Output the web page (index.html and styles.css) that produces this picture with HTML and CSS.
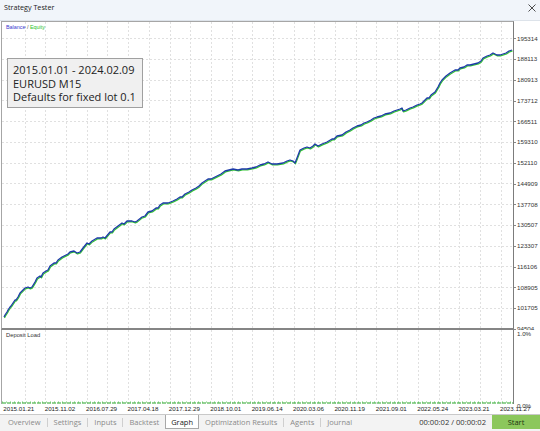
FILE: index.html
```html
<!DOCTYPE html>
<html lang="en">
<head>
<meta charset="utf-8">
<title>Strategy Tester</title>
<link rel="stylesheet" href="styles.css">
</head>
<body>
<div class="window">
  <header class="titlebar">
    <span class="title">Strategy Tester</span>
    <svg class="close" width="8" height="8" viewBox="0 0 8 8"><path d="M0.5 0.5L7.5 7.5M7.5 0.5L0.5 7.5" stroke="#3a3a3a" stroke-width="0.9" fill="none"/></svg>
  </header>
  <div class="chart">
    <div class="plots">
      <div class="panel main-panel">
        <svg class="plot-svg" width="511" height="306" viewBox="2 22 511 306">
          <path class="grid" d="M25.5 22V328M45.5 22V328M66.5 22V328M87.5 22V328M107.5 22V328M128.5 22V328M149.5 22V328M170.5 22V328M190.5 22V328M211.5 22V328M232.5 22V328M252.5 22V328M273.5 22V328M294.5 22V328M314.5 22V328M335.5 22V328M356.5 22V328M376.5 22V328M397.5 22V328M418.5 22V328M439.5 22V328M459.5 22V328M480.5 22V328M501.5 22V328M2 38.5H513M2 59.5H513M2 80.5H513M2 100.5H513M2 121.5H513M2 142.5H513M2 163.5H513M2 183.5H513M2 204.5H513M2 225.5H513M2 246.5H513M2 266.5H513M2 287.5H513M2 308.5H513"/>
          <polyline class="equity" points="4,317 5,315 7,312 8,310 10,307 11,306 13,303 15,300 16,300 18,297 20,293 23,290 25,288 28,287 30,288 32,287 35,282 37,278 40,276 41,277 43,273 46,271 48,270 50,266 54,263 56,263 58,260 62,257 66,255 68,254 70,252 74,251 77,253 80,252 83,248 87,243 89,244 92,241 97,238 101,238 103,237 105,238 110,232 112,232 114,229 118,226 122,223 124,224 127,221 132,221 135,222 137,221 142,217 145,216 148,212 152,211 156,208 158,208 160,205 163,203 168,203 173,201 177,199 180,197 182,197 185,194 189,192 192,190 196,188 199,186 202,183 205,181 208,179 211,179 213,178 217,176 221,174 225,171 229,170 233,169 238,170 242,169 247,169 252,168 256,167 260,165 264,164 268,162 270,163 272,164 277,164 283,163 287,161 290,160 293,161 295,163 297,158 300,150 304,148 307,147 310,148 313,146 315,144 318,146 322,144 327,142 332,139 334,139 337,136 342,135 346,132 350,130 353,128 357,126 361,125 364,123 367,122 371,120 374,118 377,117 381,116 385,114 390,113 394,111 397,110 400,109 402,108 403,111 406,110 410,108 413,107 417,105 420,104 422,103 425,100 427,98 429,98 431,95 435,92 438,87 440,83 442,80 446,76 450,73 455,70 458,70 460,68 464,67 467,65 470,65 474,64 478,63 481,61 483,58 487,56 490,55 493,53 495,54 497,55 500,55 503,54 506,53 509,51 512,50"/>
          <polyline class="balance" points="4,317 5,315 7,312 8,310 10,307 11,306 13,303 15,300 16,300 18,297 20,293 23,290 25,288 28,287 30,288 32,287 35,282 37,278 40,276 41,277 43,273 46,271 48,270 50,266 54,263 56,263 58,260 62,257 66,255 68,254 70,252 74,251 77,253 80,252 83,248 87,243 89,244 92,241 97,238 101,238 103,237 105,238 110,232 112,232 114,229 118,226 122,223 124,224 127,221 132,221 135,222 137,221 142,217 145,216 148,212 152,211 156,208 158,208 160,205 163,203 168,203 173,201 177,199 180,197 182,197 185,194 189,192 192,190 196,188 199,186 202,183 205,181 208,179 211,179 213,178 217,176 221,174 225,171 229,170 233,169 238,170 242,169 247,169 252,168 256,167 260,165 264,164 268,162 270,163 272,164 277,164 283,163 287,161 290,160 293,161 295,163 297,158 300,150 304,148 307,147 310,148 313,146 315,144 318,146 322,144 327,142 332,139 334,139 337,136 342,135 346,132 350,130 353,128 357,126 361,125 364,123 367,122 371,120 374,118 377,117 381,116 385,114 390,113 394,111 397,110 400,109 402,108 403,111 406,110 410,108 413,107 417,105 420,104 422,103 425,100 427,98 429,98 431,95 435,92 438,87 440,83 442,80 446,76 450,73 455,70 458,70 460,68 464,67 467,65 470,65 474,64 478,63 481,61 483,58 487,56 490,55 493,53 495,54 497,55 500,55 503,54 506,53 509,51 512,50"/>
        </svg>
        <div class="legend"><span class="bal">Balance</span> / <span class="eq">Equity</span></div>
        <div class="info">
          <div>2015.01.01 - 2024.02.09</div>
          <div>EURUSD M15</div>
          <div>Defaults for fixed lot 0.1</div>
        </div>
      </div>
      <div class="panel deposit-panel">
        <svg class="plot-svg" width="511" height="74" viewBox="2 330 511 74">
          <path class="grid" d="M25.5 330V404M45.5 330V404M66.5 330V404M87.5 330V404M107.5 330V404M128.5 330V404M149.5 330V404M170.5 330V404M190.5 330V404M211.5 330V404M232.5 330V404M252.5 330V404M273.5 330V404M294.5 330V404M314.5 330V404M335.5 330V404M356.5 330V404M376.5 330V404M397.5 330V404M418.5 330V404M439.5 330V404M459.5 330V404M480.5 330V404M501.5 330V404"/>
          <path class="load-light" d="M2 402H513"/>
          <path class="load" d="M2 403H513"/>
        </svg>
        <div class="dep-label">Deposit Load</div>
      </div>
      <div class="dates">
        <span>2015.01.21</span><span>2015.11.02</span><span>2016.07.29</span><span>2017.04.18</span><span>2017.12.29</span><span>2018.10.01</span><span>2019.06.14</span><span>2020.03.06</span><span>2020.11.19</span><span>2021.09.01</span><span>2022.05.24</span><span>2023.03.21</span><span>2023.11.27</span>
      </div>
    </div>
    <div class="axis">
      <div class="axis-main">
        <span>195314</span><span>188113</span><span>180913</span><span>173712</span><span>166511</span><span>159310</span><span>152110</span><span>144909</span><span>137708</span><span>130507</span><span>123307</span><span>116106</span><span>108905</span><span>101705</span><span>94504</span>
      </div>
      <div class="axis-dep">
        <span>1.0%</span><span>0.0%</span>
      </div>
    </div>
  </div>
  <nav class="tabs">
    <span class="tab">Overview</span><span class="sep"></span>
    <span class="tab">Settings</span><span class="sep"></span>
    <span class="tab">Inputs</span><span class="sep"></span>
    <span class="tab">Backtest</span>
    <span class="tab active">Graph</span>
    <span class="tab">Optimization Results</span><span class="sep"></span>
    <span class="tab">Agents</span><span class="sep"></span>
    <span class="tab">Journal</span>
    <span class="time">00:00:02 / 00:00:02</span>
    <span class="start">Start</span>
  </nav>
</div>
</body>
</html>
```

FILE: styles.css
```css
* { box-sizing: border-box; }
html, body { margin: 0; padding: 0; background: #ffffff; }
body { font-family: "Open Sans", "Liberation Sans", sans-serif; color: #222; }

.window {
  width: 540px;
  height: 431px;
  overflow: hidden;
  display: flex;
  flex-direction: column;
  background: #ffffff;
}

.titlebar {
  height: 21px;
  flex: 0 0 21px;
  background: #f1f5fa;
  border-bottom: 1px solid #dde3ea;
  display: flex;
  justify-content: space-between;
  align-items: flex-start;
}
.title {
  font-size: 7.2px;
  line-height: 11px;
  padding: 2px 0 0 4px;
  color: #1a1a1a;
}
.close { margin: 4px 4px 0 0; display: block; }

.chart {
  display: flex;
  flex: 0 0 393px;
  height: 393px;
}
.plots {
  width: 514px;
  flex: 0 0 514px;
  display: flex;
  flex-direction: column;
  padding-left: 1px;
}
.panel {
  position: relative;
  border-left: 1px solid #a6a6a6;
  border-right: 1px solid #7c7c7c;
  overflow: hidden;
}
.main-panel {
  height: 309px;
  flex: 0 0 309px;
  border-top: 1px solid #a6a6a6;
  border-bottom: 2px solid #858585;
}
.deposit-panel {
  height: 74px;
  flex: 0 0 74px;
}
.plot-svg { display: block; }
.grid {
  fill: none;
  stroke: #e0e0e0;
  stroke-width: 1;
  stroke-dasharray: 2 2;
}
.balance {
  fill: none;
  stroke: #1d3aa8;
  stroke-width: 1.3;
  stroke-linejoin: round;
}
.equity {
  fill: none;
  stroke: #33c433;
  stroke-width: 1.2;
  stroke-linejoin: round;
  transform: translate(0.5px, 0.9px);
}
.load { fill: none; stroke: #2aa52a; stroke-width: 1.2; stroke-dasharray: 4 1; }
.load-light { fill: none; stroke: #6fd06f; stroke-width: 1; stroke-dasharray: 1 3; }

.legend {
  position: absolute;
  left: 4px;
  top: 2px;
  font-family: "Liberation Sans", Arial, sans-serif;
  font-size: 5.4px;
  line-height: 7px;
  color: #555;
}
.legend .bal { color: #3a3ad0; }
.legend .eq { color: #2cc42c; }

.info {
  position: absolute;
  left: 5px;
  top: 36px;
  width: 136px;
  height: 50px;
  background: #f0f0f0;
  border: 1px solid #a0a0a0;
  padding: 3.8px 0 0 5px;
  font-family: "Open Sans", "Liberation Sans", sans-serif;
  font-size: 11px;
  line-height: 13.8px;
  color: #222;
}

.dep-label {
  position: absolute;
  left: 4px;
  top: 1.5px;
  font-family: "Liberation Sans", Arial, sans-serif;
  font-size: 5.8px;
  line-height: 7px;
  color: #333;
}

.dates {
  height: 10px;
  flex: 0 0 10px;
  display: flex;
  padding-left: 2.3px;
  font-family: "Liberation Sans", Arial, sans-serif;
  font-size: 6.2px;
  line-height: 10px;
  color: #222;
  white-space: nowrap;
}
.dates span { flex: 0 0 41.4px; }

.axis {
  width: 26px;
  flex: 0 0 26px;
  display: flex;
  flex-direction: column;
  font-family: "Liberation Sans", Arial, sans-serif;
  font-size: 6.2px;
  color: #333;
}
.axis-main {
  height: 309px;
  flex: 0 0 309px;
  overflow: hidden;
  display: flex;
  flex-direction: column;
  padding-top: 7.6px;
}
.axis-main span {
  flex: 0 0 20.75px;
  line-height: 20.75px;
  display: flex;
  align-items: center;
}
.axis-main span::before {
  content: "";
  width: 2px;
  height: 1px;
  background: #888;
  margin-right: 1px;
}
.axis-dep {
  height: 84px;
  flex: 0 0 84px;
  display: flex;
  flex-direction: column;
  justify-content: space-between;
  padding: 0 0 4px 3px;
  line-height: 8px;
}

.tabs {
  flex: 0 0 17px;
  height: 17px;
  display: flex;
  align-items: flex-start;
  background: #f3f3f3;
  border-top: 1px solid #c9c9c9;
  padding-left: 2px;
  font-size: 7.5px;
  color: #8a8a8a;
}
.tab {
  padding: 0 6px;
  line-height: 14px;
  height: 14px;
  white-space: nowrap;
}
.tab.active {
  background: #ffffff;
  border: 1px solid #a8a8a8;
  border-top: none;
  padding: 0 5px;
  color: #222;
}
.sep {
  width: 1px;
  height: 9px;
  margin-top: 3px;
  background: #cfcfcf;
}
.time {
  margin-left: auto;
  margin-right: 6px;
  line-height: 14px;
  font-size: 7.6px;
  color: #333;
}
.start {
  width: 48px;
  height: 14px;
  background: #8cc75c;
  color: #1c3412;
  text-align: center;
  line-height: 14px;
  font-size: 7.5px;
}
```
